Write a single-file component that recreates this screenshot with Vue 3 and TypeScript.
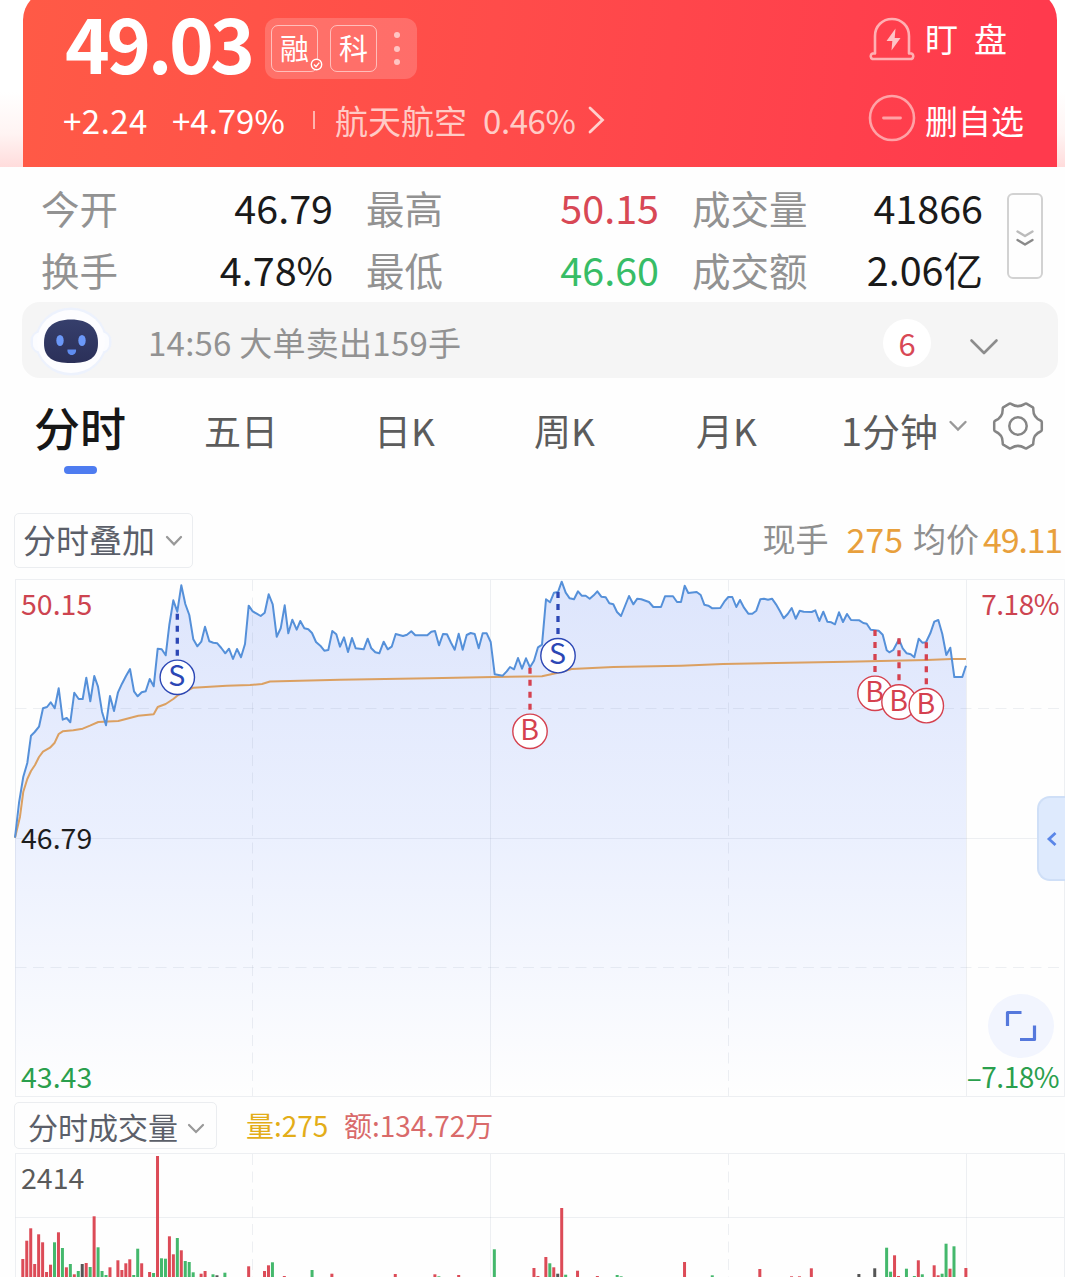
<script setup lang="ts">
interface Stat {
  label: string
  value: string
  tone?: 'up' | 'down'
}
interface Marker {
  kind: 'S' | 'B'
  x: number
  y: number
  from: number
}
type Bar = [index: number, top: number, tone: 'r' | 'g' | 'k']

const stats: Stat[] = [
  { label: '今开', value: '46.79' },
  { label: '最高', value: '50.15', tone: 'up' },
  { label: '成交量', value: '41866' },
  { label: '换手', value: '4.78%' },
  { label: '最低', value: '46.60', tone: 'down' },
  { label: '成交额', value: '2.06亿' },
]

const tabs: string[] = ['分时', '五日', '日K', '周K', '月K']

const price =
  '15,837.7 19,803 23.3,776.7 27.3,763 31,735.7 34.7,732 39,726.7 43,708.3 47,707 50.7,702.3 54.7,708.3 58.7,688.3 62.7,719.7 66.7,718 70.3,722.3 74.3,692.7 78.7,699 82.7,699 86.3,677.7 90.3,701.3 94.3,676 98,686.7 102,711.7 106,725.3 110,696 114,711 118,692.3 122,683.7 126,676 130,669 134,691.3 137.7,696.3 141.7,692.3 145.7,691.3 149.7,679 153.7,686.3 157.7,648.7 161.7,649.3 165.7,655.3 169.3,625 173.3,600.3 177.3,611.7 181.3,585.3 185.3,604 189.3,615 193.3,639.3 197.3,646.3 201.3,641.7 205,626.7 209.3,641.3 213.3,642.7 217.3,643.3 221.3,648 225.3,653.3 229,648.7 233,659 237,649 241,657.3 245,644 248.7,605.7 ' +
  '252.7,611.3 256.7,613.7 260.7,616 264.7,612.7 268.7,594.3 272.7,604.3 276.7,636.7 280.7,628.3 284.7,605.3 288.3,633.3 292.3,619.7 296.7,629.7 300.3,621 304.3,628.3 308.3,629.3 312,633 316,642 320.3,645.7 324.3,650.7 328.3,650 332.3,631 336.3,634.3 340,646.7 344,637.3 348,652 352,638 355.7,648.3 363.7,649.3 367.7,638.7 371.3,648.3 375.3,652.3 379.3,653.3 383.7,641.7 387.7,649.3 391.7,646.7 395.7,634 403,636 407,634.7 411.3,631.3 415.3,635.3 427.3,635.3 431.3,631.7 435,631 439,645.3 443,634 447,634.3 451,642.7 454.7,649.7 458.7,633.7 462.7,649.7 466.7,635 470.7,633 474.7,634 478.7,648.3 482.7,633.3 486.7,633.3 490.7,642 494.7,674.3 ' +
  '502.7,675.7 506.7,671.3 510,667 514,669.3 518,658 522,668.7 526,658.3 530,667.3 534,660.7 538,647.3 542,644.7 546,599.3 550,602.3 554,592.7 558,592 561.7,581.7 565.7,592.7 569.7,598.3 574,599.3 578,591.3 581.7,595.7 585.7,595.7 589.7,598.7 593.7,595.3 597.3,591.3 601.3,596.7 605.7,597.3 609.3,603.3 613.3,604.3 617,612 621,616 625,606 629,596 633.3,604.3 637.3,598.7 641.3,599.3 649,602 653.3,607 661,607 665,596.3 673,596.3 677,602 681,602 684.7,585.7 688.3,593 696.7,592 700.7,595 704.3,604.7 708.3,605.7 712.3,608.3 720.3,608 724.3,601.7 728.3,597 732.3,597 736.3,607 740,600 744,607.7 748.3,613.7 ' +
  '752.3,613.7 756.3,610.7 760.3,599.3 764,598.7 768,599.7 772,598.7 776,604.3 780,611.3 783.7,618.3 787.7,614 791.7,608 795.7,618.7 799.7,610.7 803.7,611.7 811.7,612 815.3,610.3 819.3,621 823.3,611.7 827.3,621.7 831.3,622.3 835,624.3 839,612.3 843,622 847,614 851,620 859.3,620.3 863.3,623 866.7,623.7 870.7,629.7 878.7,630.7 882.7,634.7 886.7,650.3 889.3,652.3 893.3,650 899,639.3 902.7,648.3 906.7,653.3 910.7,654.3 914.3,657.3 918.7,638.7 922.3,642.7 926,642.3 930.3,633.3 934.3,621.7 938.3,620 942.3,634 946.3,655 950.3,647.7 954.3,677 962.3,677 966,665.7'

const average =
  '15,837.7 20,816.7 23.3,791.7 27.3,779 31,771 35,765 39,757 43,751.7 50,747.7 54.7,742.7 58.7,734 62.7,731.3 73.3,730.3 82.7,728.7 90,725.7 98.3,722 118.3,721 138.3,715.7 153.7,714.3 157.7,707 165.7,704 173.3,699 177.3,695.7 193.3,687.7 226.7,685.7 250,685 262,684 270,681.5 340,679.7 430,678.3 493.3,677 542,676.3 558,672.7 571.7,669 613.3,667 681,665.7 723,664 846.7,661.7 926.7,660 951.7,659 966,659'

const area = `15,1096 ${price} 966,1096`

const markers: Marker[] = [
  { kind: 'S', x: 177.3, y: 677.3, from: 613.7 },
  { kind: 'S', x: 558, y: 655.7, from: 592 },
  { kind: 'B', x: 530, y: 731.3, from: 667.7 },
  { kind: 'B', x: 875, y: 693.3, from: 630 },
  { kind: 'B', x: 899, y: 702, from: 638.3 },
  { kind: 'B', x: 926.3, y: 705.7, from: 642.3 },
]

const bars: Bar[] = [
  [0, 1259, 'r'], [1, 1240.7, 'r'], [2, 1228.3, 'r'], [3, 1264, 'r'], [4, 1234.3, 'r'], [5, 1242.3, 'r'],
  [6, 1272, 'r'], [7, 1264.7, 'r'], [8, 1242.3, 'g'], [9, 1232.3, 'r'], [10, 1248, 'g'], [11, 1267.3, 'r'],
  [12, 1264, 'g'], [13, 1274.3, 'r'], [14, 1271, 'g'], [15, 1264, 'k'], [16, 1263, 'r'], [17, 1267, 'g'],
  [18, 1216.3, 'r'], [19, 1247.3, 'g'], [20, 1271, 'g'], [21, 1275, 'g'], [22, 1267.3, 'r'], [24, 1260.3, 'r'],
  [25, 1270, 'r'], [26, 1263.3, 'r'], [27, 1259.3, 'r'], [28, 1275, 'g'], [29, 1248.7, 'g'], [30, 1263.3, 'r'],
  [32, 1272, 'r'], [33, 1273, 'g'], [34, 1156, 'r'], [35, 1258.3, 'g'], [36, 1258.7, 'g'], [37, 1236.3, 'r'],
  [38, 1254.3, 'r'], [39, 1238, 'g'], [40, 1250.3, 'r'], [41, 1261, 'g'], [42, 1262, 'g'], [43, 1272.3, 'g'],
  [45, 1273.7, 'r'], [46, 1271, 'r'], [48, 1274.3, 'g'], [49, 1275.3, 'k'], [51, 1272.7, 'g'], [57, 1266.3, 'r'],
  [61, 1271, 'r'], [62, 1265.3, 'r'], [63, 1262.3, 'g'], [66, 1276, 'r'], [73, 1270, 'g'], [78, 1273.7, 'r'],
  [94, 1274, 'r'], [104, 1274.3, 'r'], [105, 1276.3, 'g'], [110, 1275, 'r'], [119, 1249.3, 'g'],
  [129, 1268, 'r'], [130, 1276, 'r'], [132, 1257, 'r'], [133, 1263.3, 'g'], [134, 1267.3, 'r'], [135, 1273.7, 'k'],
  [136, 1208, 'r'], [137, 1274.7, 'g'], [140, 1270.7, 'r'], [145, 1276, 'r'], [150, 1275, 'g'], [151, 1276.3, 'g'],
  [167, 1262, 'r'], [174, 1275.3, 'g'], [186, 1269, 'r'], [194, 1276.3, 'r'], [196, 1276.3, 'r'], [199, 1268.3, 'r'],
  [211, 1274, 'k'], [215, 1268.3, 'k'], [218, 1247.7, 'g'], [219, 1271.7, 'g'], [220, 1255.3, 'r'], [221, 1276, 'r'],
  [223, 1268.7, 'g'], [225, 1276, 'g'], [226, 1260.3, 'r'], [227, 1274.3, 'g'], [230, 1265.3, 'r'], [231, 1275.3, 'r'],
  [232, 1273.7, 'g'], [233, 1243.7, 'g'], [234, 1268.7, 'r'], [235, 1246.3, 'g'], [238, 1268, 'r'],
]
const barX = (i: number): number => 22.8 + i * 3.9625 - 1.5
</script>

<template>
  <div class="page">
    <div class="top">
      <header class="hero">
        <div class="quote">
          <div class="price-row">
            <span class="last">49.03</span>
            <div class="tags">
              <span class="tag">融
                <svg class="tick" width="13" height="13" viewBox="0 0 13 13">
                  <circle cx="6.5" cy="6.5" r="5.2" fill="#ff6a60" stroke="#fff" stroke-width="1.4" />
                  <path d="M4 6.6 6 8.6 9.3 4.6" fill="none" stroke="#fff" stroke-width="1.4" />
                </svg>
              </span>
              <span class="tag">科</span>
              <span class="dots"><i /><i /><i /></span>
            </div>
          </div>
          <div class="change-row">
            <span class="chg">+2.24</span>
            <span class="pct">+4.79%</span>
            <span class="bar" />
            <span class="sector">航天航空</span>
            <span class="sector-pct">0.46%</span>
            <svg class="go" width="18" height="28" viewBox="0 0 18 28">
              <path d="M3 2 15.5 14 3 26" fill="none" stroke="#ffd0cd" stroke-width="2.8" stroke-linecap="round" />
            </svg>
          </div>
        </div>
        <div class="actions">
          <div class="action">
            <svg width="48" height="46" viewBox="0 0 48 46">
              <g fill="none" stroke="#ffb0b3" stroke-width="2.6" stroke-linejoin="round">
                <path d="M7 37.5V20C7 10 14.500 3 24 3S41 10 41 20V37.500H43.500A3 3 0 0 1 43.500 43H4.500A3 3 0 0 1 4.500 37.500Z" />
              </g>
              <path d="M27.500 12.500 18.500 25H24.300L23.500 34.500 32.500 22H26.700Z" fill="#ffc4c6" />
            </svg>
            <span class="wide">盯盘</span>
          </div>
          <div class="action">
            <svg width="48" height="48" viewBox="0 0 48 48">
              <circle cx="24" cy="24" r="22" fill="none" stroke="#ffa2a6" stroke-width="2.6" />
              <path d="M15.500 24H32.500" stroke="#ffa2a6" stroke-width="2.800" stroke-linecap="round" />
            </svg>
            <span class="remove">删自选</span>
          </div>
        </div>
      </header>
    </div>

    <section class="summary">
      <div class="stats">
        <div v-for="s in stats" :key="s.label" class="stat">
          <span class="name">{{ s.label }}</span>
          <span class="v" :class="s.tone">{{ s.value }}</span>
        </div>
      </div>
      <div class="more">
        <svg width="20" height="20" viewBox="0 0 20 20" fill="none" stroke-width="2.4" stroke-linecap="round" stroke-linejoin="round">
          <path d="M2.500 3.500 10 8 17.500 3.500" stroke="#bbb" />
          <path d="M2.500 12 10 16.500 17.500 12" stroke="#8a8a8a" />
        </svg>
      </div>
    </section>

    <section class="alert">
      <svg class="bot" width="84" height="72" viewBox="0 0 84 72">
        <defs>
          <linearGradient id="face" x1="0" y1="0" x2="0" y2="1">
            <stop offset="0" stop-color="#363f6c" />
            <stop offset="1" stop-color="#2b3059" />
          </linearGradient>
        </defs>
        <ellipse cx="42" cy="36.500" rx="36" ry="34" fill="#edf2fd" />
        <rect x="1.500" y="25" width="81" height="24" rx="11" fill="#edf2fd" />
        <rect x="4" y="27.500" width="76" height="19" rx="7" fill="#fbfcff" />
        <ellipse cx="42" cy="36.500" rx="34" ry="31.500" fill="#fdfdff" />
        <path d="M42 14.500C60 14.500 69 23 69 38 69 53 60 58 42 58S15 53 15 38C15 23 24 14.500 42 14.500Z" fill="url(#face)" />
        <ellipse cx="31" cy="35.500" rx="3.700" ry="5.500" fill="#6b98f8" />
        <ellipse cx="53" cy="35.500" rx="3.700" ry="5.500" fill="#6b98f8" />
        <path d="M38.500 44.500H47C47.500 47.500 45.500 50 42.700 50S38 47.500 38.500 44.500Z" fill="#5f8cf0" />
      </svg>
      <span class="msg">14:56 大单卖出159手</span>
      <span class="count">6</span>
      <svg class="open" width="30" height="18" viewBox="0 0 30 18">
        <path d="M2.500 2.500 15 15 27.500 2.500" fill="none" stroke="#8c8c8c" stroke-width="2.6" stroke-linecap="round" stroke-linejoin="round" />
      </svg>
    </section>

    <nav class="tabs">
      <span v-for="(t, i) in tabs" :key="t" class="tab" :class="{ on: i === 0 }">{{ t }}</span>
      <span class="tab minute">1分钟
        <svg width="20" height="12" viewBox="0 0 20 12">
          <path d="M2.500 2 10 9.500 17.500 2" fill="none" stroke="#999" stroke-width="2.4" stroke-linecap="round" />
        </svg>
      </span>
      <svg class="gear" width="52" height="50" viewBox="-26 -25 52 50" fill="none" stroke="#858585" stroke-width="2.5" stroke-linejoin="round">
        <path d="M-8.500 -22.300Q-7.800 -22.700 -6.500 -21.900C-2.500 -19.400 2.500 -19.400 6.500 -21.900Q7.800 -22.700 8.500 -22.300L14.800 -18.700Q15.400 -18.200 15.300 -16.800C15.200 -11.800 18 -7.400 22.500 -5.500Q23.800 -4.900 23.800 -4V4Q23.800 4.900 22.500 5.500C18 7.400 15.200 11.800 15.300 16.800Q15.400 18.200 14.800 18.700L8.500 22.300Q7.800 22.700 6.500 21.900C2.500 19.400 -2.500 19.400 -6.500 21.900Q-7.800 22.700 -8.500 22.300L-14.800 18.700Q-15.400 18.200 -15.300 16.800C-15.200 11.800 -18 7.400 -22.500 5.500Q-23.800 4.900 -23.800 4V-4Q-23.800 -4.900 -22.500 -5.500C-18 -7.400 -15.200 -11.800 -15.300 -16.800Q-15.400 -18.200 -14.800 -18.700Z" />
        <circle cx="0" cy="0" r="8.700" />
      </svg>
    </nav>

    <section class="overlay-row">
      <div class="select overlay-select">
        <span>分时叠加</span>
        <svg width="18" height="12" viewBox="0 0 18 12">
          <path d="M2 2 9 9.300 16 2" fill="none" stroke="#999" stroke-width="2.3" stroke-linecap="round" />
        </svg>
      </div>
      <div class="readout">
        <span class="lbl">现手</span><span class="num first">275</span>
        <span class="lbl">均价</span><span class="num">49.11</span>
      </div>
    </section>

    <section class="chart">
      <svg width="1065" height="520" viewBox="0 578 1065 520">
        <defs>
          <linearGradient id="fill" gradientUnits="userSpaceOnUse" x1="0" y1="580" x2="0" y2="1096">
            <stop offset="0" stop-color="#dde5fc" />
            <stop offset="0.500" stop-color="#ebf0fe" />
            <stop offset="1" stop-color="#fefefe" />
          </linearGradient>
        </defs>
        <polygon :points="area" fill="url(#fill)" />
        <g fill="none" stroke="#75829a" stroke-opacity="0.120" stroke-width="1">
          <path d="M15.500 579.500H1064.500V1096.500H15.500ZM15.500 838.500H1064M490.500 580V1096M966.500 580V1096" />
          <path d="M15.500 708.500H1064M15.500 967.500H1064" stroke-dasharray="11 6.500" />
          <path d="M252.500 580V1096M728.500 580V1096" stroke-dasharray="11 6.500" />
        </g>
        <polyline :points="average" fill="none" stroke="#dba062" stroke-width="2" stroke-linejoin="round" />
        <polyline :points="price" fill="none" stroke="#5590d9" stroke-width="2" stroke-linejoin="round" />
        <g v-for="m in markers" :key="m.x" :class="['mark', m.kind]">
          <line :x1="m.x" :x2="m.x" :y1="m.from" :y2="m.y - 17.500" stroke-width="3.300" stroke-dasharray="6 6" />
          <circle :cx="m.x" :cy="m.y" r="17.200" fill="#fff" stroke-width="1.400" />
          <text :x="m.x - 0.500" :y="m.y + 8.700" text-anchor="middle">{{ m.kind }}</text>
        </g>
        <text class="axis up" x="21" y="615">50.15</text>
        <text class="axis" x="21" y="849">46.79</text>
        <text class="axis down" x="21" y="1088">43.43</text>
        <text class="axis pct-axis up" x="1059" y="615" text-anchor="end">7.18%</text>
        <text class="axis pct-axis down" x="1059" y="1088" text-anchor="end">–7.18%</text>
      </svg>
      <div class="drawer">
        <svg width="12" height="18" viewBox="0 0 12 18">
          <path d="M9.500 3 3 9 9.500 15" fill="none" stroke="#5a86e8" stroke-width="2.800" />
        </svg>
      </div>
      <div class="expand">
        <svg width="32" height="32" viewBox="0 0 32 32">
          <path d="M2.500 16V2.500H16.500M15 29.500H29.500V15.500" fill="none" stroke="#5578dc" stroke-width="3.200" stroke-linejoin="round" />
        </svg>
      </div>
    </section>

    <section class="volume-row">
      <div class="select volume-select">
        <span>分时成交量</span>
        <svg width="18" height="12" viewBox="0 0 18 12">
          <path d="M2 2 9 9 16 2" fill="none" stroke="#999" stroke-width="2.200" stroke-linecap="round" />
        </svg>
      </div>
      <span class="vol">量:275</span>
      <span class="amt">额:134.72万</span>
    </section>

    <svg class="volume" width="1065" height="126" viewBox="0 1151 1065 126">
      <g fill="none" stroke="#75829a" stroke-opacity="0.120" stroke-width="1">
        <path d="M15.500 1280V1153.500H1064.500V1280M15.500 1217.500H1064M490.500 1154V1280M966.500 1154V1280" />
        <path d="M252.500 1154V1280M728.500 1154V1280" stroke-dasharray="11 6.500" />
      </g>
      <rect v-for="b in bars" :key="b[0]" :class="b[2]" :x="barX(b[0])" :y="b[1]" width="3" :height="1280 - b[1]" />
      <text class="axis dim" x="21" y="1189">2414</text>
    </svg>
  </div>
</template>

<style>
body {
  margin: 0;
  background: #fefefe;
}
</style>

<style scoped>
.page {
  width: 1065px;
  height: 1277px;
  overflow: hidden;
  background: #fefefe;
  color: #1a1a1a;
  font-family: "Noto Sans CJK SC", "Noto Sans", sans-serif;
  white-space: nowrap;
}
.page svg {
  flex: none;
  display: block;
}
.top {
  height: 167px;
  overflow: hidden;
  background: linear-gradient(180deg, #fff 55%, #fff4f3 80%, #ffdcdc 100%);
}
.hero {
  box-sizing: border-box;
  height: 177px;
  margin: -10px 8px 0 23px;
  padding: 10px 0 0 42px;
  border-radius: 30px 30px 0 0;
  background: linear-gradient(98deg, #ff5a46 0%, #ff4c4a 45%, #ff3a4d 96%);
  display: flex;
  color: #fff;
}
.quote {
  width: 805px;
}
.price-row {
  height: 92px;
  display: flex;
  align-items: center;
}
.last {
  width: 200px;
  font-size: 76px;
  font-weight: 700;
  line-height: 80px;
  letter-spacing: -3.500px;
  margin-top: -11px;
}
.tags {
  box-sizing: border-box;
  width: 152px;
  height: 61px;
  padding-left: 6px;
  margin-top: 5px;
  border-radius: 12px;
  background: rgba(255, 255, 255, 0.18);
  display: flex;
  align-items: center;
}
.tag {
  position: relative;
  box-sizing: border-box;
  width: 47px;
  height: 47px;
  margin-right: 12px;
  border: 1px solid rgba(255, 255, 255, 0.55);
  border-radius: 7px;
  font-size: 29px;
  line-height: 42px;
  text-align: center;
}
.tick {
  position: absolute;
  right: -6px;
  bottom: 0;
}
.dots {
  display: grid;
  gap: 7.500px;
  margin-left: 5px;
}
.dots i {
  width: 6px;
  height: 6px;
  border-radius: 50%;
  background: rgba(255, 255, 255, 0.6);
}
.change-row {
  display: flex;
  align-items: center;
  height: 56px;
  font-size: 33px;
  line-height: 56px;
}
.chg {
  width: 109px;
  margin-left: -2px;
  letter-spacing: 0.500px;
}
.pct {
  width: 141px;
}
.bar {
  width: 2px;
  height: 18px;
  margin-right: 20px;
  background: #ffb4ad;
}
.sector {
  width: 148px;
  color: #ffcbc6;
}
.sector-pct {
  width: 104px;
  color: #ffcbc6;
  letter-spacing: -0.400px;
}
.actions {
  padding-top: 16px;
}
.action {
  display: flex;
  align-items: center;
  height: 46px;
  margin-bottom: 33px;
  margin-left: -2px;
  font-size: 33px;
  line-height: 46px;
}
.action svg {
  margin-right: 9px;
}
.action .wide {
  letter-spacing: 16px;
  margin-top: -2px;
}
.action .remove {
  margin-top: 4px;
}
.summary {
  height: 135px;
  box-sizing: border-box;
  padding: 9px 0 0 41px;
  display: flex;
}
.stats {
  display: grid;
  grid-template-columns: 325px 326px 291px;
  grid-auto-rows: 62px;
  width: 966px;
}
.stat {
  display: flex;
  justify-content: space-between;
  align-items: center;
  padding-right: 33px;
  line-height: 62px;
}
.stat:nth-child(3n) {
  padding-right: 0;
}
.name {
  font-size: 38.500px;
  color: #929292;
}
.v {
  font-size: 39.500px;
}
.v.up,
.count {
  color: #d84855;
}
.v.down {
  color: #37bd66;
}
.more {
  box-sizing: border-box;
  width: 36px;
  height: 86px;
  margin-top: 17px;
  border: 2.500px solid #d2d2d2;
  border-radius: 6px;
  display: flex;
  align-items: center;
  justify-content: center;
  padding-top: 4px;
}
.alert {
  height: 76px;
  margin: 0 7px 0 22px;
  border-radius: 18px;
  background: #f5f5f5;
  display: flex;
  align-items: center;
  padding-left: 7px;
}
.bot {
  margin-top: 2px;
}
.msg {
  width: 735px;
  margin: 3px 0 0 35px;
  font-size: 33px;
  letter-spacing: 0.250px;
  color: #929292;
}
.count {
  width: 48px;
  height: 48px;
  border-radius: 50%;
  background: #fff;
  font-size: 31px;
  line-height: 47px;
  text-align: center;
  margin: 5px 38px 0 0;
}
.open {
  margin-top: 13px;
}
.tabs {
  height: 108px;
  box-sizing: border-box;
  padding-left: 34px;
  display: grid;
  grid-template-columns: 170px 170px 160px 162px 145px 151px 60px;
}
.tab {
  position: relative;
  font-size: 37px;
  line-height: 104px;
  color: #5c5c5c;
}
.tab.on {
  font-size: 46px;
  font-weight: 500;
  line-height: 97px;
  color: #171717;
}
.tab.on::after {
  content: "";
  position: absolute;
  left: 30px;
  top: 88px;
  width: 33px;
  height: 8px;
  border-radius: 4px;
  background: #4e7cf0;
}
.minute {
  display: flex;
  font-size: 38px;
}
.minute svg {
  margin: 42px 0 0 10px;
}
.gear {
  margin-top: 23px;
}
.overlay-row {
  height: 92px;
  box-sizing: border-box;
  padding: 27px 3px 0 14px;
  display: flex;
  justify-content: space-between;
}
.select {
  box-sizing: border-box;
  border: 1.500px solid #ebedf0;
  border-radius: 5px;
  display: flex;
  align-items: center;
  color: #5b5f69;
}
.overlay-select {
  width: 179px;
  height: 55px;
  padding-left: 8px;
  font-size: 33px;
  gap: 10px;
}
.overlay-select span {
  margin-top: -3px;
}
.readout {
  display: flex;
  align-items: center;
  height: 50px;
  font-size: 33px;
}
.readout .lbl {
  color: #8f8f8f;
}
.readout .num {
  color: #e8a03c;
  font-size: 34px;
  margin-left: 4px;
  letter-spacing: -1.200px;
}
.readout .num.first {
  margin: 0 10px 0 18px;
  letter-spacing: 0;
}
.chart {
  position: relative;
  height: 520px;
}
.mark text {
  font-size: 28.500px;
}
.S {
  stroke: #2c47b5;
}
.B {
  stroke: #d5414f;
}
.mark text {
  stroke: none;
}
.S text {
  fill: #2c47b5;
}
.B text {
  fill: #d5414f;
}
.axis {
  font-size: 28.500px;
  fill: #1d1d1d;
}
.axis.pct-axis {
  font-size: 28px;
  letter-spacing: -0.500px;
}
.axis.up {
  fill: #cd4450;
}
.axis.down {
  fill: #2a9f4d;
}
.axis.dim {
  fill: #5a5a5a;
}
.drawer {
  position: absolute;
  right: 0;
  top: 218px;
  box-sizing: border-box;
  width: 28px;
  height: 85px;
  padding: 32px 0 0 7px;
  border: 2px solid #cfdff7;
  border-right: 0;
  border-radius: 13px 0 0 13px;
  background: #deeafd;
}
.expand {
  position: absolute;
  left: 988px;
  top: 416px;
  width: 66px;
  height: 64px;
  border-radius: 50%;
  background: #f2f5fe;
  display: flex;
  align-items: center;
  justify-content: center;
}
.volume-row {
  height: 53px;
  box-sizing: border-box;
  padding: 4px 0 0 14px;
  display: flex;
  font-size: 28px;
  line-height: 46px;
}
.volume-select {
  width: 203px;
  height: 47px;
  padding-left: 13px;
  margin-right: 29px;
  font-size: 30px;
  gap: 9px;
}
.volume-select svg {
  margin-top: 6px;
}
.vol {
  width: 98px;
  color: #e3ad18;
}
.amt {
  color: #d96a6a;
}
.r {
  fill: #dc4b57;
}
.g {
  fill: #44b86c;
}
.k {
  fill: #555;
}
</style>
